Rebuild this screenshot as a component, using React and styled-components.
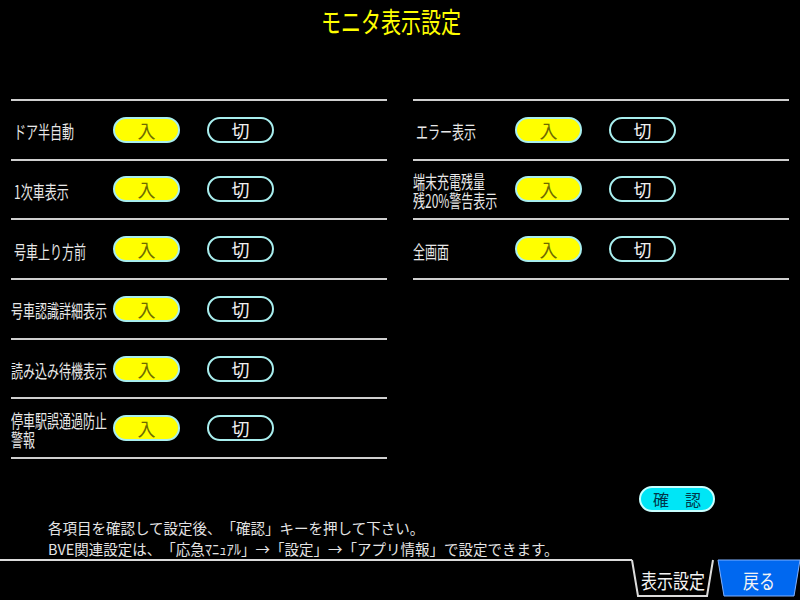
import React from "react";
import styled, { createGlobalStyle } from "styled-components";

const Global = createGlobalStyle`
  html, body { margin: 0; padding: 0; background: #000; }
  body { font-family: "Noto Sans CJK JP", "Noto Sans", sans-serif; }
  * { box-sizing: border-box; }
`;

const Screen = styled.div`
  width: 800px;
  height: 600px;
  background: #000;
  display: flex;
  flex-direction: column;
  overflow: hidden;
  font-family: "Noto Sans CJK JP", "Noto Sans", sans-serif;
  text-spacing-trim: space-all;
`;

const Title = styled.h1`
  margin: 0;
  height: 44px;
  display: flex;
  align-items: center;
  justify-content: center;
  padding-right: 18px;
  color: #ffff00;
  font-size: 20px;
  font-weight: 400;
`;

const Stretch = styled.span`
  display: inline-block;
  transform: scaleY(${(p) => p.$sy || 1});
  transform-origin: center;
  white-space: pre;
`;

const Columns = styled.div`
  margin-top: 55px;
  display: grid;
  grid-template-columns: 376px 376px;
  column-gap: 26px;
  padding-left: 11px;
  align-items: start;
`;

const Column = styled.div`
  display: flex;
  flex-direction: column;
  border-bottom: 2px solid #cfcfcf;
`;

const Row = styled.div`
  height: 59.7px;
  border-top: 2px solid #cfcfcf;
  display: flex;
  align-items: center;
`;

const Label = styled.div`
  width: 102px;
  flex: none;
  color: #e8e8e8;
  font-size: 12px;
  line-height: 13px;
  white-space: nowrap;
  padding-left: ${(p) => (p.$inset ? 3 : 0)}px;
  padding-top: 2px;
`;

const Toggle = styled.div`
  width: 67px;
  height: 26px;
  flex: none;
  border: 2px solid #a8eeee;
  border-radius: 13px;
  display: flex;
  align-items: center;
  justify-content: center;
  font-size: 18px;
  line-height: 1;
  background: ${(p) => (p.$on ? "#ffff00" : "#000")};
  color: ${(p) => (p.$on ? "#6e6a00" : "#f0f0f0")};
  margin-left: ${(p) => p.$gap || 0}px;
`;

const Footer = styled.div`
  display: flex;
  flex-direction: column;
`;

const ConfirmRow = styled.div`
  margin-top: 27px;
  display: flex;
  justify-content: flex-end;
  padding-right: 85px;
`;

const ConfirmButton = styled.div`
  width: 76px;
  height: 26px;
  border: 2px solid #c8ffff;
  border-radius: 13px;
  background: #00e6f6;
  color: #00364a;
  font-size: 16px;
  display: flex;
  align-items: center;
  justify-content: center;
  line-height: 1;
`;

const Notes = styled.div`
  margin-top: 5px;
  padding-left: 48px;
  color: #e4e4e4;
  font-size: 14.5px;
  line-height: 21px;
  white-space: nowrap;
`;

const TabBar = styled.div`
  display: flex;
  height: 41px;
`;

const TabLine = styled.div`
  flex: 1;
  border-top: 2px solid #dcdcdc;
`;

const Tab = styled.div`
  position: relative;
  width: 82px;
  height: 38px;
  flex: none;
  margin-left: ${(p) => p.$ml || 0}px;
  display: flex;
  align-items: center;
  justify-content: center;
  color: #f4f4f4;
  font-size: 16px;
  line-height: 1;
  padding-top: 3px;
`;

const TabShape = styled.svg`
  position: absolute;
  inset: 0;
  width: 100%;
  height: 100%;
  overflow: visible;
`;

const TabText = styled.span`
  position: relative;
  display: inline-block;
  transform: scaleY(1.25);
`;

const left = [
  { label: "ドア半自動", inset: true },
  { label: "1次車表示", inset: true },
  { label: "号車上り方前", inset: true },
  { label: "号車認識詳細表示" },
  { label: "読み込み待機表示" },
  { label: "停車駅誤通過防止\n警報" },
];

const right = [
  { label: "エラー表示", inset: true },
  { label: "端末充電残量\n残20%警告表示" },
  { label: "全画面" },
];

function SettingRow({ label, inset }) {
  return (
    <Row>
      <Label $inset={inset}>
        <Stretch $sy={1.5}>{label}</Stretch>
      </Label>
      <Toggle $on>入</Toggle>
      <Toggle $gap={27}>切</Toggle>
    </Row>
  );
}

export default function App() {
  return (
    <Screen>
      <Global />
      <Title>
        <Stretch $sy={1.4}>モニタ表示設定</Stretch>
      </Title>
      <Columns>
        <Column>
          {left.map((r) => (
            <SettingRow key={r.label} {...r} />
          ))}
        </Column>
        <Column>
          {right.map((r) => (
            <SettingRow key={r.label} {...r} />
          ))}
        </Column>
      </Columns>
      <Footer>
        <ConfirmRow>
          <ConfirmButton>確　認</ConfirmButton>
        </ConfirmRow>
        <Notes>
          各項目を確認して設定後、「確認」キーを押して下さい。
          <br />
          BVE関連設定は、「応急ﾏﾆｭｱﾙ」→「設定」→「アプリ情報」で設定できます。
        </Notes>
      </Footer>
      <TabBar>
        <TabLine />
        <Tab>
          <TabShape viewBox="0 0 82 38" preserveAspectRatio="none">
            <polyline
              points="0,1 6,37 75,37 81,1"
              fill="#000"
              stroke="#dcdcdc"
              strokeWidth="2"
            />
          </TabShape>
          <TabText>表示設定</TabText>
        </Tab>
        <Tab $ml={4}>
          <TabShape viewBox="0 0 82 38" preserveAspectRatio="none">
            <polygon
              points="0,1 6,37 76,37 82,1"
              fill="#0068f0"
              stroke="#7fb0ff"
              strokeWidth="1"
            />
          </TabShape>
          <TabText>戻る</TabText>
        </Tab>
      </TabBar>
    </Screen>
  );
}
